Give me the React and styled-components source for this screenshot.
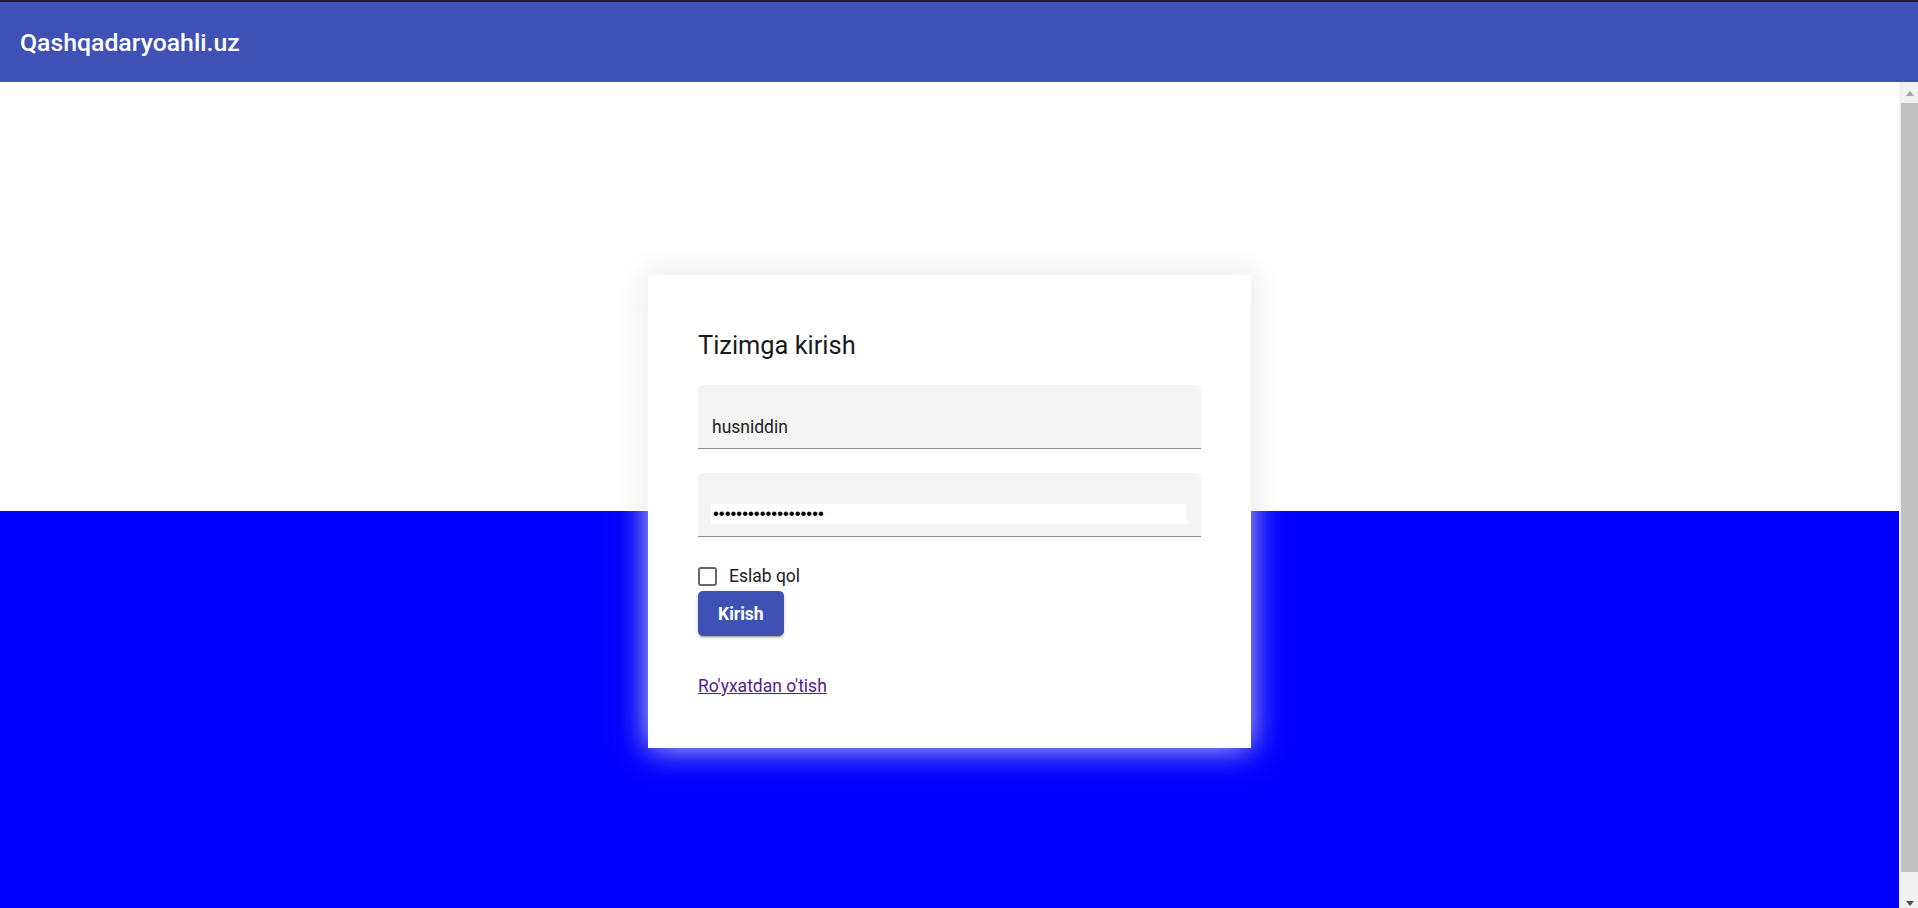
import React from "react";
import styled, { createGlobalStyle } from "styled-components";

const Global = createGlobalStyle`
  html, body {
    margin: 0;
    padding: 0;
    height: 100%;
    overflow: hidden;
  }
  body {
    font-family: Roboto, "Helvetica Neue", Arial, sans-serif;
    color: #212121;
  }
  * { box-sizing: border-box; }
`;

const Shell = styled.div`
  display: flex;
  flex-direction: column;
  height: 100vh;
`;

const Toolbar = styled.header`
  flex: 0 0 auto;
  height: 82px;
  display: flex;
  align-items: center;
  padding: 0 20px;
  background: #3f51b5;
  border-top: 2px solid #1e1e1e;
`;

const Brand = styled.span`
  font-size: 24.8px;
  font-weight: 500;
  color: #fff;
`;

const Body = styled.div`
  flex: 1 1 auto;
  display: flex;
  min-height: 0;
`;

const Viewport = styled.main`
  flex: 1 1 auto;
  overflow: hidden;
`;

// scrollbar column on the right (the page is a bit taller than the window)
const Rail = styled.div`
  flex: 0 0 19px;
  display: flex;
  flex-direction: column;
  background: #f1f1f1;
`;

const RailButton = styled.div`
  flex: 0 0 19px;
  display: flex;
  justify-content: center;
  align-items: ${(p) => (p.$down ? "flex-end" : "flex-start")};
  padding: ${(p) => (p.$down ? "0 0 2px 2px" : "9px 0 0 2px")};
`;

const Arrow = styled.span`
  width: 0;
  height: 0;
  border-left: 4.5px solid transparent;
  border-right: 4.5px solid transparent;
  ${(p) =>
    p.$down
      ? "border-top: 5px solid #505050;"
      : "border-bottom: 5px solid #a3a3a3;"}
`;

const Track = styled.div`
  flex: 1 1 auto;
  padding: 2px 0 17px 2px;
  display: flex;
`;

const Thumb = styled.div`
  flex: 1 1 auto;
  background: #c1c1c1;
`;

const Page = styled.div`
  min-height: 846px;
  display: flex;
  justify-content: center;
  align-items: flex-start;
  padding-top: 193px;
  background: linear-gradient(to bottom, #ffffff 0 429px, #0000ff 429px);
`;

const Card = styled.section`
  width: 603px;
  height: 473px;
  padding: 50px;
  background: #fff;
  box-shadow: 0 0 30px rgba(255, 255, 255, 0.8), 0 0 30px rgba(0, 0, 0, 0.14);
`;

const Title = styled.h2`
  margin: 4px 0 0;
  font-size: 25.4px;
  line-height: 32px;
  font-weight: 400;
  color: #1a1a1a;
`;

const Field = styled.div`
  height: 64px;
  margin-top: ${(p) => p.$top}px;
  display: flex;
  flex-direction: column;
  justify-content: flex-end;
  padding: 0 13px ${(p) => p.$bottom}px 14px;
  background: #f4f4f4;
  border-radius: 5px 5px 0 0;
  border-bottom: 1px solid #8c8c8c;
`;

const TextInput = styled.input`
  width: 100%;
  height: 22px;
  padding: 0;
  border: none;
  outline: none;
  background: transparent;
  font-family: Roboto, Arial, sans-serif;
  font-size: 17.5px;
  line-height: 22px;
  color: #212121;
`;

const SecretInput = styled.input`
  width: 100%;
  height: 20px;
  margin-left: -1px;
  padding: 0 2px;
  border: none;
  outline: none;
  background: #fff;
  font-family: "Liberation Sans", Arial, sans-serif;
  font-size: 16.67px;
  color: #000;
`;

const CheckRow = styled.label`
  display: flex;
  align-items: center;
  gap: 12px;
  margin-top: 28px;
  height: 22px;
  font-size: 17.5px;
  line-height: 22px;
  color: #212121;
`;

const Box = styled.input`
  appearance: none;
  margin: 0;
  width: 19px;
  height: 19px;
  border: 2px solid #666;
  border-radius: 3px;
  background: #fff;
`;

const Button = styled.button`
  display: block;
  margin-top: 4px;
  height: 45px;
  padding: 0 20px;
  border: none;
  border-radius: 5px;
  background: #3f51b5;
  color: #fff;
  font-family: Roboto, Arial, sans-serif;
  font-size: 17.5px;
  font-weight: 700;
  box-shadow: 0 3px 1px -2px rgba(0, 0, 0, 0.2), 0 2px 2px 0 rgba(0, 0, 0, 0.14),
    0 1px 5px 0 rgba(0, 0, 0, 0.12);
`;

const Footer = styled.p`
  margin: 39px 0 0;
  font-size: 17.5px;
  line-height: 22px;
`;

const Link = styled.a`
  color: #551a8b;
  text-decoration: underline;
`;

export default function App() {
  return (
    <>
      <Global />
      <Shell>
        <Toolbar>
          <Brand>Qashqadaryoahli.uz</Brand>
        </Toolbar>
        <Body>
          <Viewport>
            <Page>
              <Card>
                <Title>Tizimga kirish</Title>
                <Field $top={24} $bottom={10}>
                  <TextInput type="text" defaultValue="husniddin" readOnly />
                </Field>
                <Field $top={24} $bottom={12}>
                  <SecretInput type="password" defaultValue="husniddin1234567890" readOnly />
                </Field>
                <CheckRow>
                  <Box type="checkbox" />
                  Eslab qol
                </CheckRow>
                <Button type="button">Kirish</Button>
                <Footer>
                  <Link href="#register">Ro'yxatdan o'tish</Link>
                </Footer>
              </Card>
            </Page>
          </Viewport>
          <Rail>
            <RailButton>
              <Arrow />
            </RailButton>
            <Track>
              <Thumb />
            </Track>
            <RailButton $down>
              <Arrow $down />
            </RailButton>
          </Rail>
        </Body>
      </Shell>
    </>
  );
}
